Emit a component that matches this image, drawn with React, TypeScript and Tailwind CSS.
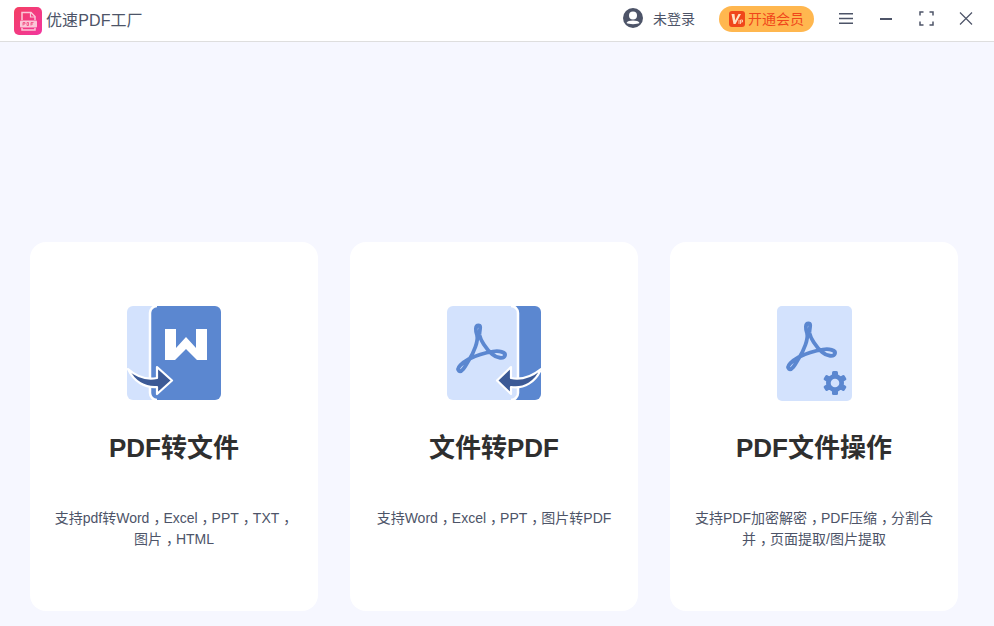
const FONT = "font-['Liberation_Sans','Noto_Sans_CJK_SC',sans-serif]";

function PdfGlyph({ dy = 0 }: { dy?: number }) {
  return (
    <path
      transform={`translate(0 ${dy})`}
      fill="none"
      stroke="#5b87d0"
      strokeWidth="3.800"
      strokeLinejoin="round"
      d="M12 65C9 62 15 57 22 53C30 49 37 47 46 45.500C52 44.500 59 46 58 49.500C57 53 50 52.500 45 48C39 43 33.500 34 32.500 29C32 25 35 19.500 31.500 19.500C28 19.500 28.500 25 30 29C31.500 35 27 46 22 54C19 59 15 67 12 65Z"
    />
  );
}

function IconWord() {
  return (
    <svg width="94" height="94" viewBox="0 0 94 94">
      <path d="M6 0H28V94H6A6 6 0 0 1 0 88V6A6 6 0 0 1 6 0Z" fill="#d3e2fd" />
      <path d="M30 0H88A6 6 0 0 1 94 6V88A6 6 0 0 1 88 94H30A6 6 0 0 1 24 88V6A6 6 0 0 1 30 0Z" fill="#5b87d0" />
      <path d="M30 0A7 7 0 0 0 23 7V87A7 7 0 0 0 30 94" fill="none" stroke="#fff" strokeWidth="2.500" />
      <path d="M38 23H49V42L59 31L69 42V23H80V54H70L59 43L48 54H38Z" fill="#fff" />
      <path d="M1 63C10 71 20 74 30 72V61L45 74.500L30 88V81C18 82 7 76 1 63Z" fill="#3c5a96" stroke="#fff" strokeWidth="2.200" strokeLinejoin="round" />
    </svg>
  );
}

function IconToPdf() {
  return (
    <svg width="94" height="94" viewBox="0 0 94 94">
      <path d="M62 0H88A6 6 0 0 1 94 6V88A6 6 0 0 1 88 94H62Z" fill="#5b87d0" />
      <path d="M6 0H64A6 6 0 0 1 70 6V88A6 6 0 0 1 64 94H6A6 6 0 0 1 0 88V6A6 6 0 0 1 6 0Z" fill="#d3e2fd" />
      <path d="M64 0A7 7 0 0 1 71 7V87A7 7 0 0 1 64 94" fill="none" stroke="#fff" strokeWidth="2.500" />
      <PdfGlyph />
      <path d="M94 63C84 71 74 74 64 72V61L50 74.500L64 88V81C77 83 89 76 94 63Z" fill="#3c5a96" stroke="#fff" strokeWidth="2.200" strokeLinejoin="round" />
    </svg>
  );
}

function IconOps() {
  return (
    <svg width="75" height="95" viewBox="0 0 75 95">
      <rect x="0" y="0" width="75" height="95" rx="5" fill="#d3e2fd" />
      <PdfGlyph dy={-2} />
      <g transform="translate(58 77)" fill="#5b87d0">
        <circle r="9" />
        <rect x="-3" y="-12" width="6" height="24" rx="1.500" />
        <rect x="-3" y="-12" width="6" height="24" rx="1.500" transform="rotate(60)" />
        <rect x="-3" y="-12" width="6" height="24" rx="1.500" transform="rotate(120)" />
        <circle r="4.300" fill="#d3e2fd" />
      </g>
    </svg>
  );
}

function Comma() {
  return <span className="ml-[4px] tracking-[-4px]">，</span>;
}

function Card({ title, icon, desc }: { title: string; icon: React.ReactNode; desc: React.ReactNode }) {
  return (
    <div className="w-[288px] h-[369px] bg-white rounded-2xl flex flex-col items-center pt-[64px]">
      <div className="h-[95px] flex items-start justify-center">{icon}</div>
      <div className="mt-[27px] h-[40px] leading-[40px] text-[26px] font-bold text-[#2f2f2f]">{title}</div>
      <div className="mt-[40px] w-[250px] text-center text-sm leading-[21px] text-[#4d5468]">{desc}</div>
    </div>
  );
}

export default function App() {
  return (
    <div className={`${FONT} w-[994px] h-[626px] bg-[#f6f7ff] overflow-hidden flex flex-col`}>
      <header className="h-[42px] bg-white border-b border-[#dedede] flex items-center justify-between pl-[14px] pr-[21px]">
        <div className="flex items-center gap-[4px]">
          <svg width="28" height="28" viewBox="0 0 28 28">
            <defs>
              <linearGradient id="lg" x1="0" y1="0" x2="1" y2="1">
                <stop offset="0" stopColor="#f43f62" />
                <stop offset="1" stopColor="#f2369f" />
              </linearGradient>
            </defs>
            <rect width="28" height="28" rx="5" fill="url(#lg)" />
            <path d="M8 13V5.500H17L21 9.500V13M8 21V23H21V21" fill="none" stroke="#fbc7d8" strokeWidth="1.500" />
            <path d="M16.500 5.500V10H21" fill="none" stroke="#fbc7d8" strokeWidth="1.200" />
            <rect x="6" y="13.500" width="17" height="7" rx="1" fill="#fbc7d8" />
            <path d="M9 15.500V18.500M9 15.500H11V17H9M13 15.500V18.500H14.500V15.500H13M17 15.500V18.500M17 15.500H19.500M17 17H19" stroke="#f0447c" strokeWidth="0.800" fill="none" />
          </svg>
          <span className="text-base tracking-[0.1px] text-[#4d5468] leading-[28px]">优速PDF工厂</span>
        </div>
        <div className="flex items-center mb-[4px]">
          <svg width="20" height="20" viewBox="0 0 20 20" className="mb-[1px]">
            <circle cx="10" cy="10" r="10" fill="#4d5468" />
            <circle cx="10" cy="7.500" r="4" fill="#fff" />
            <path d="M3.500 15C5 11.800 15 11.800 16.500 15C14.500 16.500 5.500 16.500 3.500 15Z" fill="#fff" />
          </svg>
          <span className="ml-[10px] text-sm text-[#4d5468]">未登录</span>
          <div className="ml-[24px] w-[95px] h-[26px] rounded-[13px] bg-[#ffb74f] flex items-center pl-[10px] gap-[3px]">
            <svg width="16" height="16" viewBox="0 0 16 16">
              <rect width="16" height="16" rx="3" fill="#f0461a" />
              <path d="M2.500 3H5.500L6.200 9.500L9.500 3H12L6.500 13H4.500Z" fill="#ffe2c2" />
              <path d="M10 9V13M11.500 13V9H13.500V11H11.500" stroke="#ffe2c2" strokeWidth="0.800" fill="none" />
            </svg>
            <span className="text-sm text-[#f0461a]">开通会员</span>
          </div>
          <svg width="14" height="11" viewBox="0 0 14 11" className="ml-[25px]">
            <path d="M0 0.700H14M0 5.500H14M0 10.300H14" stroke="#4d5468" strokeWidth="1.400" />
          </svg>
          <svg width="12" height="2" viewBox="0 0 12 2" className="ml-[27px]">
            <rect width="12" height="2" fill="#4d5468" />
          </svg>
          <svg width="15" height="15" viewBox="0 0 15 15" className="ml-[27px]">
            <path d="M1 4.500V1H4.500M10.500 1H14V4.500M14 10.500V14H10.500M4.500 14H1V10.500" fill="none" stroke="#4d5468" strokeWidth="1.500" />
          </svg>
          <svg width="14" height="13" viewBox="0 0 14 13" className="ml-[25px]">
            <path d="M1 0.500L13 12.500M13 0.500L1 12.500" stroke="#4d5468" strokeWidth="1.200" />
          </svg>
        </div>
      </header>
      <main className="flex-1 flex justify-start gap-[32px] pt-[200px] pl-[30px]">
        <Card title="PDF转文件" icon={<IconWord />} desc={<>支持pdf转Word<Comma />Excel<Comma />PPT<Comma />TXT<Comma /><br />图片<Comma />HTML</>} />
        <Card title="文件转PDF" icon={<IconToPdf />} desc={<>支持Word<Comma />Excel<Comma />PPT<Comma />图片转PDF</>} />
        <Card title="PDF文件操作" icon={<IconOps />} desc={<>支持PDF加密解密<Comma />PDF压缩<Comma />分割合<br />并<Comma />页面提取/图片提取</>} />
      </main>
    </div>
  );
}
